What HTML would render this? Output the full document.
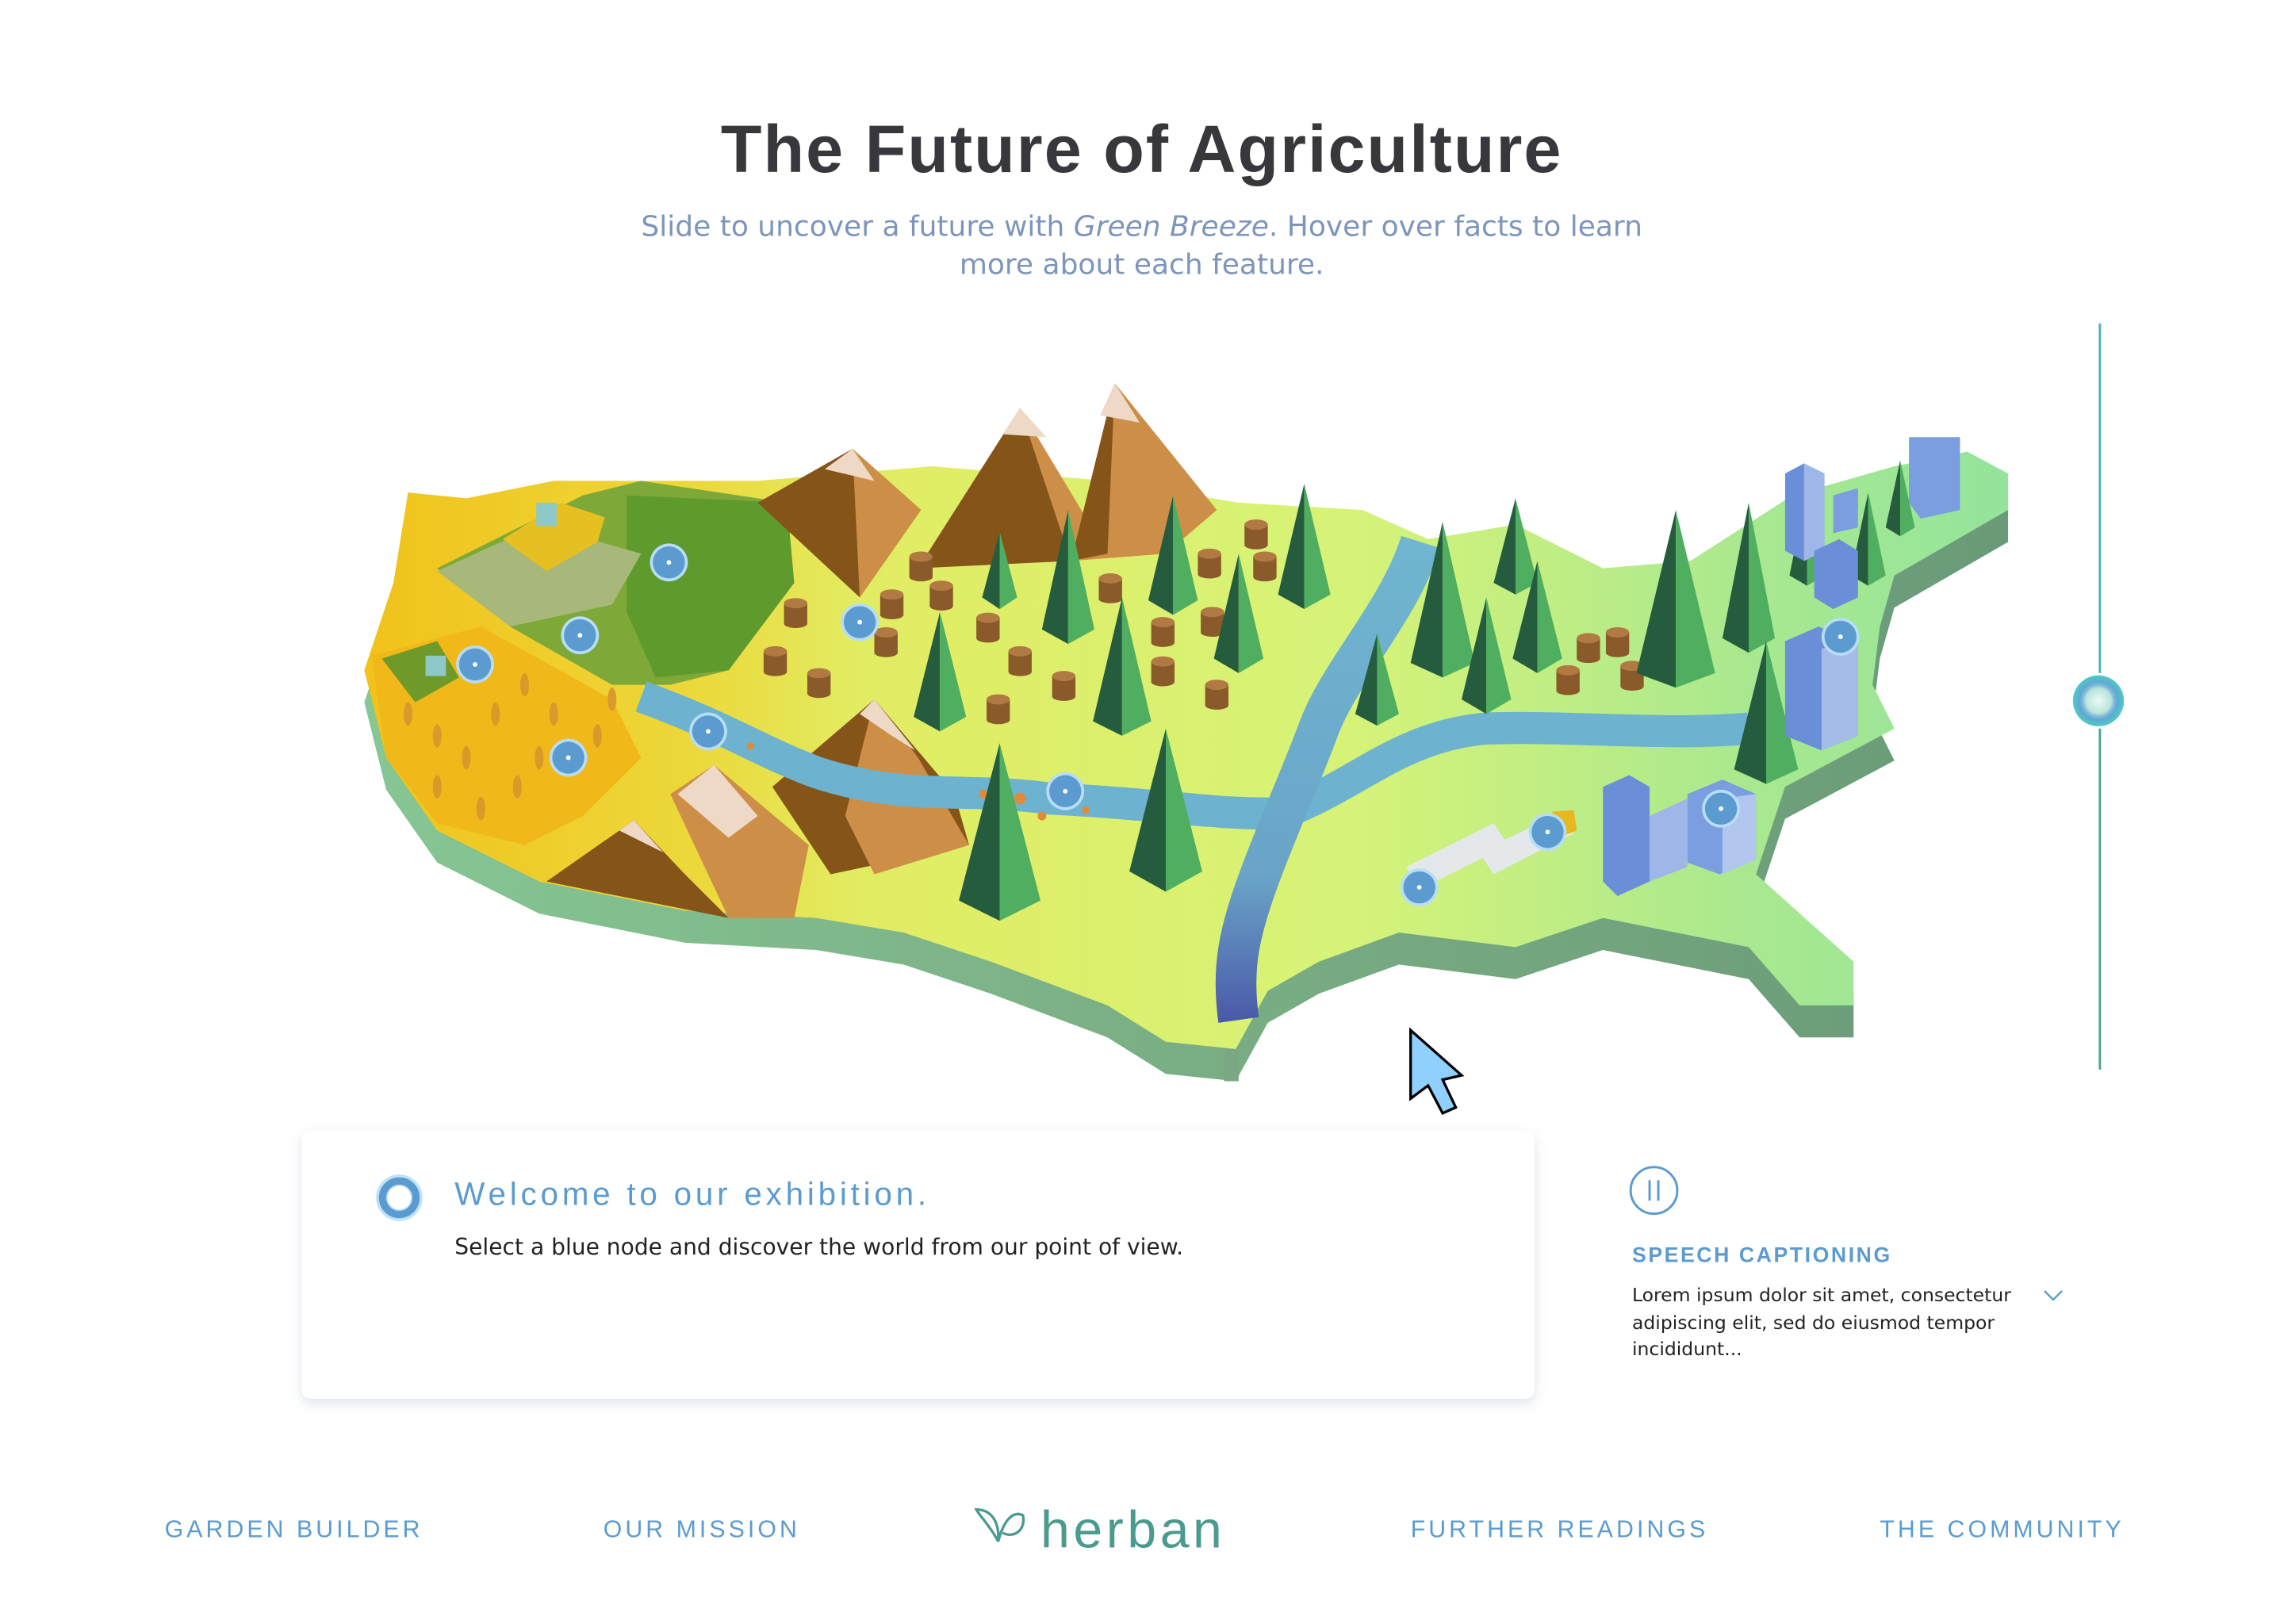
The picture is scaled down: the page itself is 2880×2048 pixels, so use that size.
<!DOCTYPE html>
<html><head><meta charset="utf-8"><style>
html,body{margin:0;padding:0;background:#fff;width:2880px;height:2048px;overflow:hidden}
svg{display:block}
</style></head><body>
<svg width="2880" height="2048" viewBox="0 0 1567.35 1114.56" xmlns="http://www.w3.org/2000/svg">
<defs>
<linearGradient id="top" x1="0" x2="1" y1="0" y2="0">
<stop offset="0" stop-color="#f1c21a"/><stop offset="0.2" stop-color="#ecd83a"/><stop offset="0.3" stop-color="#e2ec62"/><stop offset="0.6" stop-color="#d6f378"/><stop offset="0.85" stop-color="#a8e890"/><stop offset="1" stop-color="#94e49c"/>
</linearGradient>
<linearGradient id="side" x1="0" x2="1"><stop offset="0" stop-color="#86c694"/><stop offset="0.5" stop-color="#7aae84"/><stop offset="1" stop-color="#6a9a78"/></linearGradient>
<linearGradient id="riv" x1="0" y1="0" x2="0" y2="1"><stop offset="0" stop-color="#70b6d0"/><stop offset="0.7" stop-color="#6aa4c8"/><stop offset="1" stop-color="#4a5aa8"/></linearGradient>
<radialGradient id="knob"><stop offset="0" stop-color="#eefaf6"/><stop offset="0.5" stop-color="#b6e4dc"/><stop offset="0.6" stop-color="#86bfd8"/><stop offset="0.75" stop-color="#5fa8d6"/><stop offset="1" stop-color="#50ccc0"/></radialGradient>
<filter id="sh" x="-10%" y="-10%" width="120%" height="130%"><feDropShadow dx="0" dy="3" stdDeviation="4" flood-color="#9ab0c8" flood-opacity="0.35"/></filter>
<g id="node"><circle r="13" fill="#b8ddf6"/><circle r="11" fill="#5b9bd0"/><circle r="1.6" fill="#fff"/></g>
<g id="stump"><rect x="-8" y="-8" width="16" height="14" fill="#8b5a2b"/><ellipse cx="0" cy="6" rx="8" ry="3" fill="#8b5a2b"/><ellipse cx="0" cy="-8" rx="8" ry="3.5" fill="#b07a42"/></g>
</defs>

<text x="783.5" y="118" text-anchor="middle" font-family="Liberation Sans, sans-serif" font-size="46" font-weight="bold" fill="#38383c" letter-spacing="1.1">The Future of Agriculture</text>
<text x="783.5" y="162" text-anchor="middle" font-family="DejaVu Sans, sans-serif" font-size="19.6" fill="#7d95ba">Slide to uncover a future with <tspan font-style="italic">Green Breeze</tspan>. Hover over facts to learn</text>
<text x="783.5" y="188" text-anchor="middle" font-family="DejaVu Sans, sans-serif" font-size="19.6" fill="#7d95ba">more about each feature.</text>

<!-- slider -->
<line x1="1441" y1="222" x2="1441" y2="462" stroke="#4bb7b4" stroke-width="1.6"/>
<line x1="1441" y1="500" x2="1441" y2="734" stroke="#4aa690" stroke-width="1.6"/>
<circle cx="1440" cy="481" r="17.5" fill="url(#knob)"/>

<!-- map side -->
<path transform="translate(0,22)" fill="url(#side)" d="M280,338 L320,342 L380,330 L520,330 L640,320 L760,330 L850,345 L935,350 L980,370 L1040,360 L1100,390 L1160,385 L1230,340 L1300,320 L1350,310 L1378,325 L1378,350 L1300,395 L1290,430 L1285,470 L1300,500 L1225,540 L1205,600 L1272,660 L1272,690 L1235,690 L1200,650 L1100,630 L1040,650 L960,640 L905,660 L870,680 L848,720 L800,715 L760,690 L720,675 L680,660 L620,640 L560,630 L470,625 L370,605 L300,570 L265,520 L250,460 L270,400 Z"/>
<rect x="840" y="690" width="10" height="52" fill="#7aa884"/>
<!-- map top -->
<path fill="url(#top)" d="M280,338 L320,342 L380,330 L520,330 L640,320 L760,330 L850,345 L935,350 L980,370 L1040,360 L1100,390 L1160,385 L1230,340 L1300,320 L1350,310 L1378,325 L1378,350 L1300,395 L1290,430 L1285,470 L1300,500 L1225,540 L1205,600 L1272,660 L1272,690 L1235,690 L1200,650 L1100,630 L1040,650 L960,640 L905,660 L870,680 L848,720 L800,715 L760,690 L720,675 L680,660 L620,640 L560,630 L470,625 L370,605 L300,570 L265,520 L250,460 L270,400 Z"/>

<!-- wheat field -->
<path d="M255,450 L330,430 L420,480 L440,520 L400,560 L360,580 L300,565 L265,520 Z" fill="#f1b81a"/>
<g fill="#d99a2a">
<ellipse cx="280" cy="490" rx="3" ry="8"/><ellipse cx="300" cy="505" rx="3" ry="8"/><ellipse cx="320" cy="520" rx="3" ry="8"/><ellipse cx="340" cy="490" rx="3" ry="8"/><ellipse cx="360" cy="470" rx="3" ry="8"/><ellipse cx="380" cy="490" rx="3" ry="8"/><ellipse cx="300" cy="540" rx="3" ry="8"/><ellipse cx="330" cy="555" rx="3" ry="8"/><ellipse cx="355" cy="540" rx="3" ry="8"/><ellipse cx="410" cy="505" rx="3" ry="8"/><ellipse cx="420" cy="480" rx="3" ry="8"/><ellipse cx="370" cy="520" rx="3" ry="8"/>
</g>
<!-- green crop field -->
<path d="M300,390 L400,340 L440,330 L540,345 L545,400 L500,460 L460,470 L420,470 L350,430 Z" fill="#7ea838"/>
<path d="M430,340 L540,345 L545,400 L500,460 L450,465 L430,420 Z" fill="#5f9a2c"/>
<path d="M300,392 L370,360 L440,380 L420,415 L350,430 Z" fill="#a8b87a"/>
<!-- harvesters -->
<path d="M345,370 L385,345 L415,355 L410,372 L375,392 Z" fill="#e6c020"/><rect x="368" y="345" width="14" height="16" fill="#8fc8c8"/>
<path d="M262,452 L300,440 L315,465 L285,482 Z" fill="#6f9a2a"/><rect x="292" y="450" width="14" height="14" fill="#8fc8c8"/>

<!-- mountains -->
<path d="M630,390 L700,280 L735,385 Z" fill="#855419"/><path d="M700,280 L735,385 L760,380 Z" fill="#cd8f47"/>
<path d="M735,385 L765,263 L835,350 L800,380 Z" fill="#cd8f47"/><path d="M735,385 L765,263 L760,380 Z" fill="#855419"/>
<path d="M688,298 L700,280 L718,300 Z" fill="#eed8c6"/><path d="M755,285 L765,263 L782,290 Z" fill="#eed8c6"/>
<path d="M520,345 L585,308 L632,350 L590,410 Z" fill="#855419"/><path d="M585,308 L632,350 L590,410 Z" fill="#cd8f47"/><path d="M566,322 L585,308 L600,330 Z" fill="#eed8c6"/>
<path d="M530,540 L600,480 L655,545 L665,580 L570,600 Z" fill="#855419"/><path d="M600,480 L630,520 L665,580 L600,600 L580,560 Z" fill="#cd8f47"/><path d="M590,490 L600,480 L628,515 L612,505 Z" fill="#eed8c6"/>
<path d="M460,545 L490,525 L555,580 L545,630 L500,630 Z" fill="#cd8f47"/><path d="M465,545 L490,525 L520,560 L500,575 Z" fill="#eed8c6"/>
<path d="M375,605 L435,563 L470,600 L500,630 Z" fill="#855419"/><path d="M425,570 L435,563 L455,585 Z" fill="#eed8c6"/>

<!-- river -->
<path d="M440,478 C500,500 520,515 560,530 C620,550 660,540 720,548 C800,552 840,560 880,558 C930,540 960,505 1020,500 C1080,498 1140,505 1200,500" fill="none" stroke="#6db3cf" stroke-width="22"/>
<path d="M975,372 C960,420 920,460 905,500 C890,540 880,560 865,600 C850,640 845,665 850,700" fill="none" stroke="url(#riv)" stroke-width="28"/>
<g fill="#e08a3a"><circle cx="700" cy="548" r="4"/><circle cx="715" cy="560" r="3"/><circle cx="745" cy="556" r="2.5"/><circle cx="515" cy="512" r="2.5"/><circle cx="675" cy="545" r="3"/></g>

<!-- stumps -->
<use href="#stump" x="546" y="422"/><use href="#stump" x="532" y="455"/><use href="#stump" x="562" y="470"/><use href="#stump" x="612" y="416"/><use href="#stump" x="608" y="442"/><use href="#stump" x="646" y="410"/><use href="#stump" x="632" y="390"/><use href="#stump" x="678" y="432"/><use href="#stump" x="700" y="455"/><use href="#stump" x="685" y="488"/><use href="#stump" x="730" y="472"/><use href="#stump" x="762" y="405"/><use href="#stump" x="798" y="435"/><use href="#stump" x="798" y="462"/><use href="#stump" x="832" y="428"/><use href="#stump" x="835" y="478"/><use href="#stump" x="830" y="388"/><use href="#stump" x="868" y="390"/><use href="#stump" x="862" y="368"/><use href="#stump" x="1076" y="468"/><use href="#stump" x="1120" y="465"/><use href="#stump" x="1110" y="442"/><use href="#stump" x="1090" y="446"/>

<!-- trees -->
<g>
<path d="M686,510 L658,618 L686,632 Z" fill="#265c3e"/><path d="M686,510 L714,618 L686,632 Z" fill="#4fae60"/>
<path d="M800,500 L775,598 L800,612 Z" fill="#265c3e"/><path d="M800,500 L825,598 L800,612 Z" fill="#4fae60"/>
<path d="M645,420 L627,492 L645,502 Z" fill="#265c3e"/><path d="M645,420 L663,492 L645,502 Z" fill="#4fae60"/>
<path d="M733,350 L715,432 L733,442 Z" fill="#265c3e"/><path d="M733,350 L751,432 L733,442 Z" fill="#4fae60"/>
<path d="M770,410 L750,495 L770,505 Z" fill="#265c3e"/><path d="M770,410 L790,495 L770,505 Z" fill="#4fae60"/>
<path d="M805,340 L788,412 L805,422 Z" fill="#265c3e"/><path d="M805,340 L822,412 L805,422 Z" fill="#4fae60"/>
<path d="M850,380 L833,452 L850,462 Z" fill="#265c3e"/><path d="M850,380 L867,452 L850,462 Z" fill="#4fae60"/>
<path d="M895,332 L877,408 L895,418 Z" fill="#265c3e"/><path d="M895,332 L913,408 L895,418 Z" fill="#4fae60"/>
<path d="M686,365 L674,410 L686,418 Z" fill="#265c3e"/><path d="M686,365 L698,410 L686,418 Z" fill="#4fae60"/>
<path d="M990,358 L968,455 L990,465 Z" fill="#265c3e"/><path d="M990,358 L1012,455 L990,465 Z" fill="#4fae60"/>
<path d="M1040,342 L1025,400 L1040,408 Z" fill="#265c3e"/><path d="M1040,342 L1055,400 L1040,408 Z" fill="#4fae60"/>
<path d="M1055,385 L1038,452 L1055,462 Z" fill="#265c3e"/><path d="M1055,385 L1072,452 L1055,462 Z" fill="#4fae60"/>
<path d="M1020,410 L1003,480 L1020,490 Z" fill="#265c3e"/><path d="M1020,410 L1037,480 L1020,490 Z" fill="#4fae60"/>
<path d="M945,435 L930,490 L945,498 Z" fill="#265c3e"/><path d="M945,435 L960,490 L945,498 Z" fill="#4fae60"/>
<path d="M1150,350 L1123,462 L1150,472 Z" fill="#265c3e"/><path d="M1150,350 L1177,462 L1150,472 Z" fill="#4fae60"/>
<path d="M1200,345 L1182,438 L1200,448 Z" fill="#265c3e"/><path d="M1200,345 L1218,438 L1200,448 Z" fill="#4fae60"/>
<path d="M1212,440 L1190,528 L1212,538 Z" fill="#265c3e"/><path d="M1212,440 L1234,528 L1212,538 Z" fill="#4fae60"/>
<path d="M1240,335 L1228,395 L1240,402 Z" fill="#265c3e"/><path d="M1240,335 L1252,395 L1240,402 Z" fill="#4fae60"/>
<path d="M1282,338 L1270,395 L1282,402 Z" fill="#265c3e"/><path d="M1282,338 L1294,395 L1282,402 Z" fill="#4fae60"/>
<path d="M1304,316 L1294,362 L1304,368 Z" fill="#265c3e"/><path d="M1304,316 L1314,362 L1304,368 Z" fill="#4fae60"/>
</g>

<!-- buildings -->
<g>
<path d="M1225,325 L1238,318 L1252,325 L1252,378 L1238,385 L1225,378 Z" fill="#6a8ed8"/><path d="M1238,318 L1252,325 L1252,378 L1238,385 Z" fill="#9fb6e8"/>
<path d="M1258,340 L1275,335 L1275,362 L1258,366 Z" fill="#7a9ee0"/>
<path d="M1245,378 L1262,370 L1275,378 L1275,410 L1258,418 L1245,410 Z" fill="#6a8ed8"/>
<path d="M1310,300 L1345,300 L1345,350 L1318,356 L1310,345 Z" fill="#7a9ee0"/>
<path d="M1225,440 L1248,430 L1275,442 L1275,505 L1250,515 L1225,505 Z" fill="#6a8ed8"/><path d="M1250,445 L1275,442 L1275,505 L1250,515 Z" fill="#a5bce9"/>
<path d="M1100,540 L1118,532 L1132,540 L1132,605 L1110,615 L1100,605 Z" fill="#6a8ed8"/>
<path d="M1132,560 L1158,548 L1158,595 L1132,605 Z" fill="#9fb6e8"/>
<path d="M1158,545 L1182,535 L1205,545 L1205,590 L1180,600 L1158,592 Z" fill="#7a9ee0"/><path d="M1182,548 L1205,545 L1205,590 L1182,600 Z" fill="#b2c6ee"/>
</g>
<!-- trucks -->
<path d="M965,595 L1025,565 L1035,580 L975,610 Z" fill="#e4e8ea"/><path d="M1015,585 L1070,558 L1080,572 L1025,600 Z" fill="#e4e8ea"/><path d="M1065,557 L1080,556 L1082,570 L1072,574 Z" fill="#e8b820"/>

<!-- nodes -->
<use href="#node" x="459" y="386"/><use href="#node" x="398" y="436"/><use href="#node" x="326" y="456"/><use href="#node" x="390" y="520"/><use href="#node" x="486" y="502"/><use href="#node" x="590" y="427"/><use href="#node" x="731" y="543"/><use href="#node" x="974" y="609"/><use href="#node" x="1062" y="571"/><use href="#node" x="1181" y="555"/><use href="#node" x="1263" y="437"/>

<!-- cursor -->
<path d="M968,707 L1003,738 L990,741 L999,760 L990,764 L980,745 L968,754 Z" fill="#8fd0ff" stroke="#000" stroke-width="1.8" stroke-linejoin="miter"/>

<!-- card -->
<rect x="207" y="776" width="846" height="184" rx="6" fill="#fff" filter="url(#sh)"/>
<circle cx="274" cy="822" r="16" fill="#bfe2fb"/><circle cx="274" cy="822" r="11.5" fill="none" stroke="#5b9bd0" stroke-width="5"/><circle cx="274" cy="822" r="8" fill="#fff"/>
<text x="312" y="827" font-family="Liberation Sans, sans-serif" font-size="22" fill="#5b9bd0" letter-spacing="2.6">Welcome to our exhibition.</text>
<text x="312" y="861" font-family="DejaVu Sans, sans-serif" font-size="15.3" fill="#222">Select a blue node and discover the world from our point of view.</text>

<!-- right -->
<circle cx="1135" cy="817" r="16" fill="none" stroke="#5b9bd0" stroke-width="1.6"/>
<line x1="1132" y1="810" x2="1132" y2="824" stroke="#5b9bd0" stroke-width="1.6"/><line x1="1138" y1="810" x2="1138" y2="824" stroke="#5b9bd0" stroke-width="1.6"/>
<text x="1120" y="866" font-family="Liberation Sans, sans-serif" font-size="14.5" font-weight="bold" fill="#5b9bd0" letter-spacing="1.4">SPEECH CAPTIONING</text>
<g font-family="DejaVu Sans, sans-serif" font-size="12.8" fill="#222">
<text x="1120" y="893">Lorem ipsum dolor sit amet, consectetur</text>
<text x="1120" y="912">adipiscing elit, sed do eiusmod tempor</text>
<text x="1120" y="930">incididunt...</text>
</g>
<path d="M1403,886 L1409,892 L1415,886" fill="none" stroke="#5b9bd0" stroke-width="1.3"/>

<!-- footer -->
<g font-family="Liberation Sans, sans-serif" font-size="16.5" fill="#5b9bd0" letter-spacing="2.2">
<text x="113" y="1055">GARDEN BUILDER</text>
<text x="414" y="1055">OUR MISSION</text>
<text x="968" y="1055">FURTHER READINGS</text>
<text x="1290" y="1055">THE COMMUNITY</text>
</g>
<path d="M685,1058 C680,1048 672,1040 670,1036 C680,1036 686,1044 685,1058 C688,1046 694,1036 702,1040 C704,1050 696,1056 688,1052" fill="none" stroke="#4a9a8e" stroke-width="1.8"/>
<text x="714" y="1062" font-family="Liberation Sans, sans-serif" font-size="36" fill="#4a9a8e" letter-spacing="2.5">herban</text>
</svg>
</body></html>
